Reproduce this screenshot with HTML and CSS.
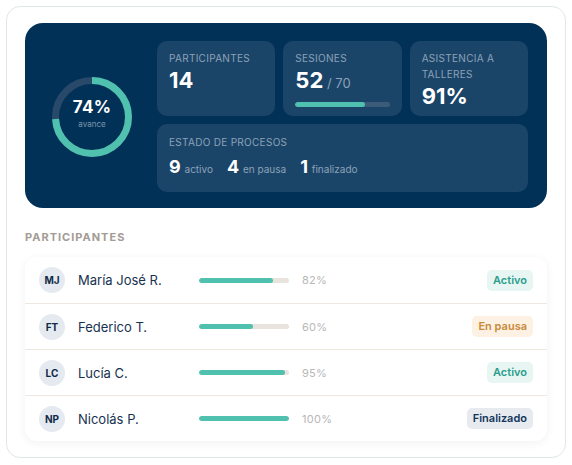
FILE: index.html
```html
<!DOCTYPE html>
<html lang="es">
<head>
<meta charset="utf-8">
<title>Panel de participantes</title>
<link rel="stylesheet" href="styles.css">
</head>
<body>
<div class="page">
  <div class="card">
    <section class="hero">
      <div class="ring">
        <svg class="ring-svg" width="80" height="80" viewBox="0 0 80 80">
          <circle cx="40" cy="40" r="36.5" fill="none" stroke="#28496a" stroke-width="7"/>
          <circle cx="40" cy="40" r="36.5" fill="none" stroke="#4fc1ae" stroke-width="7" stroke-dasharray="169.7 229.3" transform="rotate(-90 40 40)"/>
        </svg>
        <div class="ring-text">
          <span class="ring-value">74%</span>
          <span class="ring-label">avance</span>
        </div>
      </div>
      <div class="stats">
        <div class="stat">
          <div class="stat-label">Participantes</div>
          <div class="stat-value">14</div>
        </div>
        <div class="stat">
          <div class="stat-label">Sesiones</div>
          <div class="stat-value">52<span class="stat-of"> / 70</span></div>
          <div class="stat-bar"><div class="stat-bar-fill" style="width:74%"></div></div>
        </div>
        <div class="stat">
          <div class="stat-label">Asistencia a talleres</div>
          <div class="stat-value">91%</div>
        </div>
        <div class="stat stat-wide">
          <div class="stat-label">Estado de procesos</div>
          <div class="states">
            <span class="state"><b>9</b> activo</span>
            <span class="state"><b>4</b> en pausa</span>
            <span class="state"><b>1</b> finalizado</span>
          </div>
        </div>
      </div>
    </section>

    <h2 class="section-title">Participantes</h2>
    <ul class="list">
      <li class="row">
        <span class="avatar">MJ</span>
        <span class="name">María José R.</span>
        <span class="bar"><span class="bar-fill" style="width:82%"></span></span>
        <span class="pct">82%</span>
        <span class="badge badge-active">Activo</span>
      </li>
      <li class="row">
        <span class="avatar">FT</span>
        <span class="name">Federico T.</span>
        <span class="bar"><span class="bar-fill" style="width:60%"></span></span>
        <span class="pct">60%</span>
        <span class="badge badge-paused">En pausa</span>
      </li>
      <li class="row">
        <span class="avatar">LC</span>
        <span class="name">Lucía C.</span>
        <span class="bar"><span class="bar-fill" style="width:95%"></span></span>
        <span class="pct">95%</span>
        <span class="badge badge-active">Activo</span>
      </li>
      <li class="row">
        <span class="avatar">NP</span>
        <span class="name">Nicolás P.</span>
        <span class="bar"><span class="bar-fill" style="width:100%"></span></span>
        <span class="pct">100%</span>
        <span class="badge badge-done">Finalizado</span>
      </li>
    </ul>
  </div>
</div>
</body>
</html>
```

FILE: styles.css
```css
* { box-sizing: border-box; }

html, body {
  margin: 0;
  padding: 0;
  background: #ffffff;
  font-family: Inter, "Noto Sans", "Liberation Sans", sans-serif;
}

.page {
  padding: 6px;
}

.card {
  width: 560px;
  border: 1px solid #dfe7e7;
  border-radius: 14px;
  background: #ffffff;
  padding: 16px 18px 16px 18px;
}

/* Hero */
.hero {
  background: #023158;
  border-radius: 18px;
  padding: 18px 19px 16px 27px;
  display: flex;
  align-items: center;
  gap: 25px;
}

.ring {
  position: relative;
  width: 80px;
  height: 80px;
  flex: 0 0 80px;
}

.ring-svg {
  display: block;
}

.ring-text {
  position: absolute;
  inset: 0;
  display: flex;
  flex-direction: column;
  align-items: center;
  justify-content: flex-start;
  padding-top: 20px;
}

.ring-value {
  color: #ffffff;
  font-size: 17px;
  font-weight: 700;
  line-height: 20px;
  letter-spacing: 0.2px;
}

.ring-label {
  margin-top: 2px;
  color: #7d95ad;
  font-size: 8px;
  line-height: 11px;
}

.stats {
  flex: 1;
  display: grid;
  grid-template-columns: 1fr 1fr 1fr;
  gap: 8px;
}

.stat {
  background: #1b4568;
  border-radius: 10px;
  padding: 9px 12px 9px 12px;
}

.stat-wide {
  grid-column: 1 / 4;
  padding: 10px 12px 11px 12px;
}

.stat-label {
  color: #8ba2b8;
  font-size: 10px;
  line-height: 16px;
  text-transform: uppercase;
  letter-spacing: 0.3px;
}

.stat-value {
  margin-top: 3px;
  color: #ffffff;
  font-size: 22px;
  font-weight: 700;
  line-height: 22px;
}

.stat-of {
  color: #8ba2b8;
  font-size: 13px;
  font-weight: 400;
}

.stat-bar {
  margin-top: 8px;
  height: 5px;
  border-radius: 3px;
  background: #3b5b79;
  overflow: hidden;
}

.stat-bar-fill {
  height: 100%;
  background: #4fc1ae;
  border-radius: 3px;
}

.states {
  margin-top: 5px;
  display: flex;
  gap: 14px;
  line-height: 24px;
}

.state {
  color: #8ba2b8;
  font-size: 10px;
}

.state b {
  color: #ffffff;
  font-size: 18px;
  font-weight: 700;
  margin-right: 1px;
}

/* Section */
.section-title {
  margin: 22px 0 13px 0;
  color: #a39b95;
  font-size: 11px;
  font-weight: 700;
  line-height: 14px;
  letter-spacing: 1px;
  text-transform: uppercase;
}

.list {
  list-style: none;
  margin: 0;
  padding: 0;
  border-radius: 12px;
  background: #ffffff;
  box-shadow: 0 2px 10px rgba(30, 40, 60, 0.06);
}

.row {
  display: grid;
  grid-template-columns: 26px 108px 90px 1fr auto;
  column-gap: 13px;
  align-items: center;
  height: 46px;
  padding: 0 14px;
}

.row + .row {
  border-top: 1px solid #efe6de;
}

.avatar {
  width: 26px;
  height: 26px;
  border-radius: 50%;
  background: #e5eaf0;
  color: #102b47;
  font-size: 10px;
  font-weight: 700;
  display: flex;
  align-items: center;
  justify-content: center;
}

.name {
  color: #17324f;
  font-size: 13px;
}

.bar {
  display: block;
  height: 5px;
  border-radius: 3px;
  background: #e9e3dd;
  overflow: hidden;
}

.bar-fill {
  display: block;
  height: 100%;
  border-radius: 3px;
  background: #4fc1ae;
}

.pct {
  color: #b7b7b7;
  font-size: 11px;
  letter-spacing: 0.3px;
}

.badge {
  justify-self: end;
  font-size: 11px;
  font-weight: 600;
  line-height: 21px;
  padding: 0 6px;
  border-radius: 5px;
}

.badge-active {
  background: #e7f6f3;
  color: #2a9d8c;
}

.badge-paused {
  background: #fcf1e2;
  color: #c88a3b;
}

.badge-done {
  background: #e7ebf0;
  color: #12355b;
}
```
